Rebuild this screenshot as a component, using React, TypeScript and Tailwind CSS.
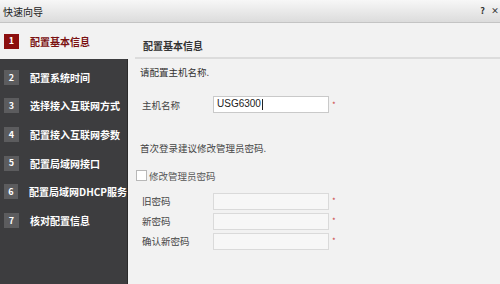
import React from "react";

const STEPS = [
  { n: 2, label: "配置系统时间" },
  { n: 3, label: "选择接入互联网方式" },
  { n: 4, label: "配置接入互联网参数" },
  { n: 5, label: "配置局域网接口" },
  { n: 6, label: "配置局域网DHCP服务" },
  { n: 7, label: "核对配置信息" },
];

const font = { fontFamily: '"Noto Sans CJK SC", "Liberation Sans", sans-serif' };

function Field({ label, value, top }: { label: string; value?: string; top: string }) {
  return (
    <div className={`flex items-center ${top}`}>
      <span className="w-[71px] text-[9.5px] text-[#444]">{label}</span>
      <div
        className={`w-[116px] h-[17px] border flex items-center px-[3px] ${
          value !== undefined ? "bg-white border-[#c9c9c9]" : "bg-[#f7f7f7] border-[#dadada]"
        }`}
      >
        {value !== undefined && (
          <span className="text-[10px] text-[#222] leading-none" style={{ fontFamily: '"Liberation Sans", sans-serif' }}>
            {value}
            <span className="inline-block w-px h-[11px] bg-[#222] align-middle ml-px" />
          </span>
        )}
      </div>
      <span className="ml-[3px] text-[8px] text-[#c44]">*</span>
    </div>
  );
}

export default function App() {
  return (
    <div className="w-[500px] h-[284px] overflow-hidden bg-[#f2f2f2] flex flex-col" style={font}>
      {/* title bar */}
      <div className="h-[23px] shrink-0 flex items-center justify-between bg-gradient-to-b from-[#f7f7f7] to-[#dcdcdc] border-b border-[#c4c4c4]">
        <span className="pl-[3px] text-[10px] text-[#222]">快速向导</span>
        <div className="flex items-center gap-[6px] pr-[1px] text-[9px] font-bold text-[#333]">
          <span>?</span>
          <span className="text-[8px]">×</span>
        </div>
      </div>

      <div className="flex flex-1 min-h-0">
        {/* sidebar */}
        <div className="w-[128px] shrink-0 flex flex-col">
          <div className="h-[36px] flex items-center pl-[4px] gap-[11px]">
            <span className="w-[15px] h-[15px] bg-[#8c0f0f] text-white text-[9px] font-bold flex items-center justify-center">1</span>
            <span className="text-[10px] font-bold text-[#7a1010]">配置基本信息</span>
          </div>
          <div className="flex-1 bg-[#3d3d3f] border-r border-[#2b2b2b] pt-[4px]">
            {STEPS.map((s) => (
              <div key={s.n} className="h-[28.6px] flex items-center pl-[4px] gap-[11px]">
                <span className="w-[15px] h-[15px] bg-[#5c5c5e] text-white text-[9px] font-bold flex items-center justify-center">
                  {s.n}
                </span>
                <span className="text-[10px] font-bold text-white whitespace-nowrap">{s.label}</span>
              </div>
            ))}
          </div>
        </div>

        {/* main */}
        <div className="flex-1 flex flex-col pl-[7px]">
          <div className="pl-[8px] pt-[15px] h-[34px] text-[10px] font-bold text-[#333]">配置基本信息</div>
          <div className="h-[2px] bg-[#dcdcdc]" />
          <div className="pl-[5px] pt-[6px] text-[9.5px] text-[#333]">请配置主机名称.</div>
          <div className="pl-[7px]">
            <Field label="主机名称" value="USG6300" top="mt-[17px]" />
          </div>
          <div className="pl-[5px] mt-[28px] text-[9.5px] text-[#444]">首次登录建议修改管理员密码.</div>
          <div className="flex items-center mt-[13px] pl-[1px] gap-[2px]">
            <span className="w-[11px] h-[11px] bg-white border border-[#b8b8b8]" />
            <span className="text-[9.5px] text-[#555]">修改管理员密码</span>
          </div>
          <div className="pl-[7px] flex flex-col">
            <Field label="旧密码" top="mt-[10px]" />
            <Field label="新密码" top="mt-[3px]" />
            <Field label="确认新密码" top="mt-[3px]" />
          </div>
        </div>
      </div>
    </div>
  );
}
